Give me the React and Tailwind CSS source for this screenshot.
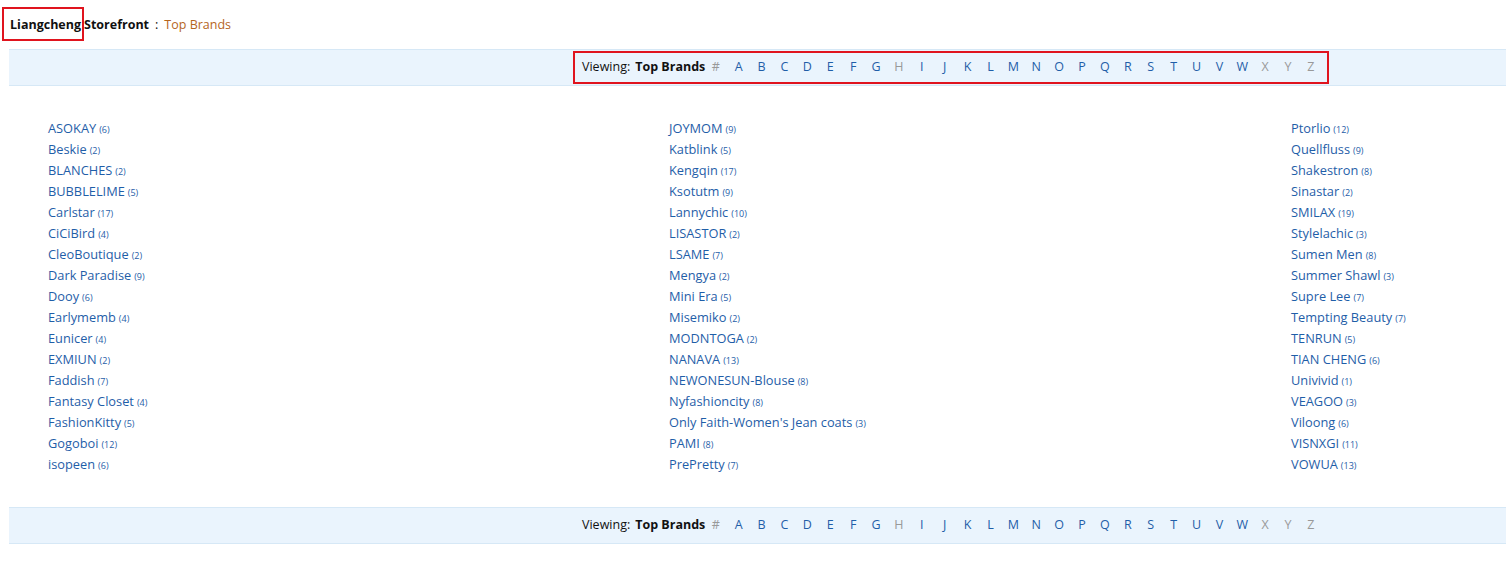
const col1 = [
  ["ASOKAY", 6], ["Beskie", 2], ["BLANCHES", 2], ["BUBBLELIME", 5], ["Carlstar", 17],
  ["CiCiBird", 4], ["CleoBoutique", 2], ["Dark Paradise", 9], ["Dooy", 6], ["Earlymemb", 4],
  ["Eunicer", 4], ["EXMIUN", 2], ["Faddish", 7], ["Fantasy Closet", 4], ["FashionKitty", 5],
  ["Gogoboi", 12], ["isopeen", 6],
];
const col2 = [
  ["JOYMOM", 9], ["Katblink", 5], ["Kengqin", 17], ["Ksotutm", 9], ["Lannychic", 10],
  ["LISASTOR", 2], ["LSAME", 7], ["Mengya", 2], ["Mini Era", 5], ["Misemiko", 2],
  ["MODNTOGA", 2], ["NANAVA", 13], ["NEWONESUN-Blouse", 8], ["Nyfashioncity", 8],
  ["Only Faith-Women's Jean coats", 3], ["PAMI", 8], ["PrePretty", 7],
];
const col3 = [
  ["Ptorlio", 12], ["Quellfluss", 9], ["Shakestron", 8], ["Sinastar", 2], ["SMILAX", 19],
  ["Stylelachic", 3], ["Sumen Men", 8], ["Summer Shawl", 3], ["Supre Lee", 7],
  ["Tempting Beauty", 7], ["TENRUN", 5], ["TIAN CHENG", 6], ["Univivid", 1], ["VEAGOO", 3],
  ["Viloong", 6], ["VISNXGI", 11], ["VOWUA", 13],
];

const letters = "#ABCDEFGHIJKLMNOPQRSTUVWXYZ".split("");
const disabled = ["#", "H", "X", "Y", "Z"];

function LetterNav({ boxed }) {
  return (
    <div className="flex h-[37px] ml-[9px] w-[1497px] items-center border-y border-[#d6e8f6] bg-[#eaf4fd]">
      <div
        className={`ml-[564px] flex h-[33px] items-center pl-[7px] pr-[5px] ${
          boxed ? "border-2 border-[#e0141e]" : "border-2 border-transparent"
        }`}
      >
        <span className="text-[12.5px] text-[#111]">Viewing:</span>
        <span className="ml-[5px] text-[12.5px] font-bold text-[#111]">Top Brands</span>
        <div className="ml-[-1px] flex">
          {letters.map((l) => (
            <span
              key={l}
              className={`w-[22.9px] text-center text-[12.5px] ${
                disabled.includes(l) ? "text-[#999]" : "text-[#1f5ea8]"
              }`}
            >
              {l}
            </span>
          ))}
        </div>
      </div>
    </div>
  );
}

function BrandColumn({ items }) {
  return (
    <ul className="flex flex-col">
      {items.map(([name, n]) => (
        <li key={name} className="h-[21px] leading-[21px] whitespace-nowrap text-[#1f5ea8]">
          <span className="text-[12.8px]">{name}</span>
          <span className="ml-[3px] text-[9px]">({n})</span>
        </li>
      ))}
    </ul>
  );
}

export default function App() {
  return (
    <div
      className="h-[566px] w-[1506px] overflow-hidden bg-white"
      style={{ fontFamily: '"Open Sans", "Noto Sans", sans-serif' }}
    >
      <div className="flex h-[49px] items-start pt-[7px] pl-[2px]">
        <span className="inline-flex h-[34px] items-center border-2 border-[#e0141e] pl-[6px] pr-[1px] pt-[3px] text-[12.5px] font-bold text-[#111]">
          Liangcheng
        </span>
        <span className="flex h-[34px] items-center pt-[3px] text-[12.5px] font-bold text-[#111]">
          Storefront
        </span>
        <span className="flex h-[34px] items-center pt-[3px] px-[6px] text-[12.5px] text-[#111]">:</span>
        <span className="flex h-[34px] items-center pt-[3px] text-[12.5px] text-[#b5651d]">Top Brands</span>
      </div>

      <LetterNav boxed />

      <div className="grid grid-cols-[621px_622px_200px] pl-[48px] pt-[31px] h-[421px]">
        <BrandColumn items={col1} />
        <BrandColumn items={col2} />
        <BrandColumn items={col3} />
      </div>

      <LetterNav />
    </div>
  );
}
